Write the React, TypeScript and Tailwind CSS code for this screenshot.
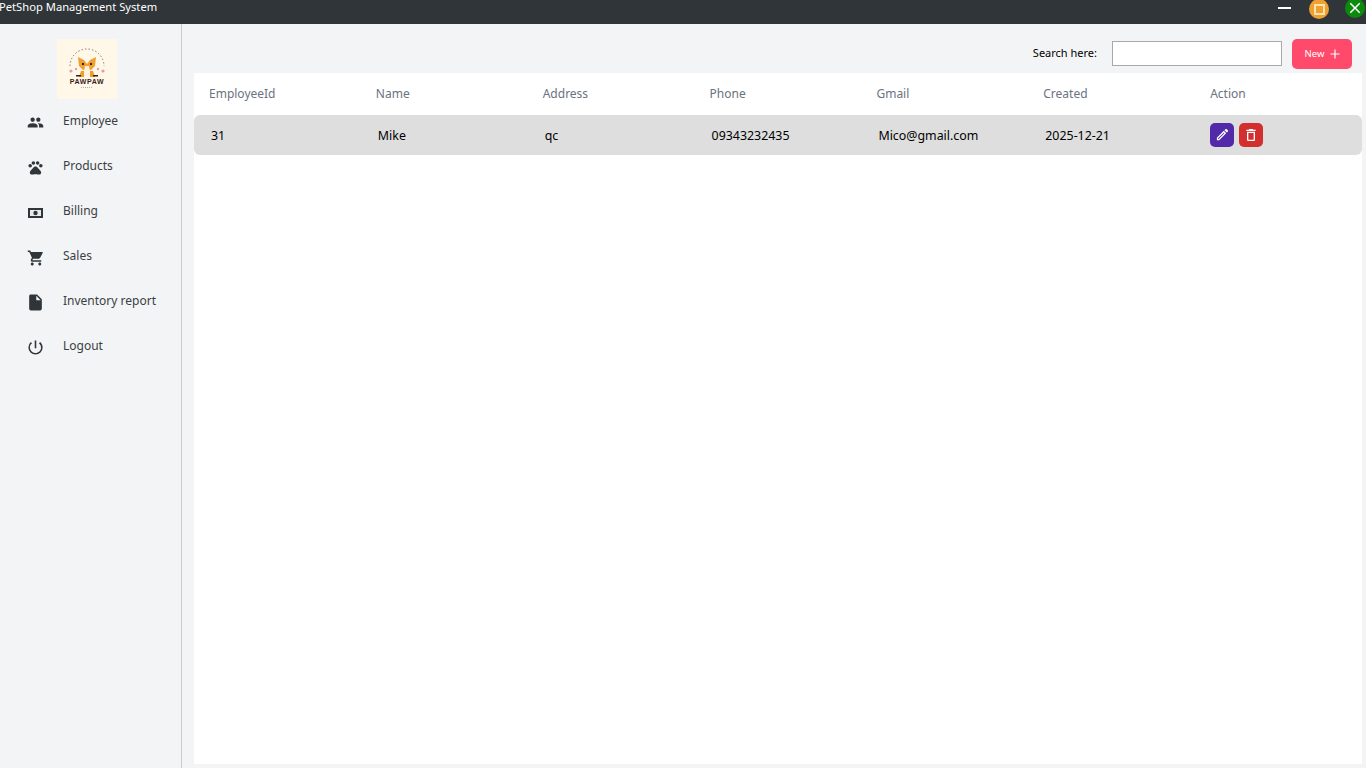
import { MdPeople, MdPets, MdShoppingCart, MdInsertDriveFile, MdPowerSettingsNew, MdOutlineEdit, MdDeleteOutline, MdClose } from "react-icons/md";
import { Plus } from "lucide-react";

function MoneyIcon() {
  return (
    <svg viewBox="0 0 15 10" className="w-[15px] h-[10px] mt-px">
      <rect width="15" height="10" fill="#2f3538" />
      <rect x="2" y="2" width="11" height="6" fill="#e8e9eb" />
      <circle cx="7.5" cy="5" r="2.2" fill="#2f3538" />
    </svg>
  );
}

function Logo() {
  return (
    <div className="relative w-[60px] h-[60px] bg-[#fff8e9] flex flex-col items-center justify-end pb-[13px]">
      <svg viewBox="0 0 60 60" className="absolute inset-0 w-full h-full">
        <path d="M13 27 A17 17 0 0 1 47 27" fill="none" stroke="#6b5a55" strokeWidth="0.8" strokeDasharray="1.5 2" />
        <path d="M21 18 L27 21 L30 25 L33 21 L39 18 L38 27 L34 31 L26 31 L22 27 Z" fill="#f0a030" />
        <path d="M28 27 L32 27 L34 37 L26 37 Z" fill="#fff1dc" />
        <path d="M24 32 L27 32 L27 38 L22 38 Z" fill="#ef9c2c" />
        <path d="M33 32 L36 32 L38 38 L33 38 Z" fill="#ef9c2c" />
        <circle cx="14" cy="32" r="1.6" fill="#e79aa5" />
        <circle cx="46" cy="32" r="1.6" fill="#e79aa5" />
        <circle cx="19" cy="30" r="1.2" fill="#e79aa5" />
        <circle cx="41" cy="30" r="1.2" fill="#e79aa5" />
        <path d="M25 24 h2 v2 h-2z M33 24 h2 v2 h-2z M19 36 h5 v1.5 h-5z M36 36 h5 v1.5 h-5z" fill="#3a1f20" />
        <path d="M24 48.5 h12" stroke="#a89a90" strokeWidth="0.8" strokeDasharray="1 1" />
      </svg>
      <span className="relative text-[7px] leading-[8px] font-bold tracking-[0.6px] text-[#3a1a20] font-['Liberation_Sans',sans-serif]">PAWPAW</span>
    </div>
  );
}

const navItems = [
  { label: "Employee", icon: <MdPeople size={17} color="#2f3538" /> },
  { label: "Products", icon: <MdPets size={17} color="#2f3538" /> },
  { label: "Billing", icon: <MoneyIcon /> },
  { label: "Sales", icon: <MdShoppingCart size={18} color="#2f3538" /> },
  { label: "Inventory report", icon: <MdInsertDriveFile size={19} color="#2f3538" /> },
  { label: "Logout", icon: <MdPowerSettingsNew size={19} color="#2f3538" /> },
];

const columns = ["EmployeeId", "Name", "Address", "Phone", "Gmail", "Created", "Action"];
const cells = ["31", "Mike", "qc", "09343232435", "Mico@gmail.com", "2025-12-21"];

export default function App() {
  return (
    <div className="w-[1366px] h-[768px] overflow-hidden flex flex-col bg-[#f3f4f6] font-['Noto_Sans','Open_Sans',sans-serif]">
      <div className="h-6 shrink-0 bg-[#2f3538] flex items-start overflow-hidden">
        <span className="-ml-[1px] text-white text-[11.2px] leading-[14px] whitespace-nowrap">PetShop Management System</span>
        <div className="ml-auto flex items-start">
          <div className="w-[13px] h-0.5 mt-[7px] bg-white" />
          <div className="ml-[18px] -mt-px w-5 h-5 rounded-full bg-[#eea131] flex items-center justify-center">
            <div className="w-[11px] h-[11px] border-2 border-[#fde0ac]" />
          </div>
          <div className="ml-4 mr-px -mt-0.5 w-5 h-5 rounded-full bg-[#0b8a0b] flex items-center justify-center">
            <MdClose size={18} color="#ffffff" />
          </div>
        </div>
      </div>

      <div className="flex-1 flex min-h-0">
        <aside className="w-[182px] shrink-0 border-r border-[#c9cbce] flex flex-col">
          <div className="pt-[15px] pb-[8px] pl-[57px]">
            <Logo />
          </div>
          <nav className="flex flex-col">
            {navItems.map((item) => (
              <div key={item.label} className="h-[45px] flex items-start">
                <div className="w-[63px] pl-[26px] pt-[5px] h-[26px] flex items-center">
                  <div className="w-[19px] flex justify-center">{item.icon}</div>
                </div>
                <span className="text-[12px] leading-[18px] pt-[5px] text-[#3a3f44]">{item.label}</span>
              </div>
            ))}
          </nav>
        </aside>

        <main className="flex-1 flex flex-col min-w-0 pl-3 pr-1 pb-1">
          <div className="h-[49px] shrink-0 flex items-center justify-end pr-2.5 pt-2.5">
            <span className="text-[11px] text-black mr-[15px]">Search here:</span>
            <input className="w-[170px] h-[25px] bg-white border border-[#a9a9a9] mr-2.5" />
            <button className="w-[60px] h-[30px] pl-[3px] rounded-[5px] bg-[#ff4a6b] text-white text-[9.5px] flex items-center justify-center gap-1">
              <span className="pt-0.5">New</span> <Plus size={14} strokeWidth={2} />
            </button>
          </div>
          <div className="flex-1 bg-white">
            <div className="grid grid-cols-7 h-[42px] items-center">
              {columns.map((c) => (
                <div key={c} className="pl-[15px] text-[12px] text-[#6b7280]">{c}</div>
              ))}
            </div>
            <div className="grid grid-cols-7 h-10 items-center bg-[#dedede] rounded-md">
              {cells.map((c) => (
                <div key={c} className="pl-[17px] pt-[3px] text-[12.4px] text-black">{c}</div>
              ))}
              <div className="pl-[15px] flex gap-[5px] -mt-[1px]">
                <div className="w-6 h-6 rounded-[5px] bg-[#5229a8] flex items-center justify-center">
                  <MdOutlineEdit size={15} color="#ffffff" />
                </div>
                <div className="w-6 h-6 rounded-[5px] bg-[#d32f2f] flex items-center justify-center">
                  <MdDeleteOutline size={16} color="#ffffff" />
                </div>
              </div>
            </div>
          </div>
        </main>
      </div>
    </div>
  );
}
